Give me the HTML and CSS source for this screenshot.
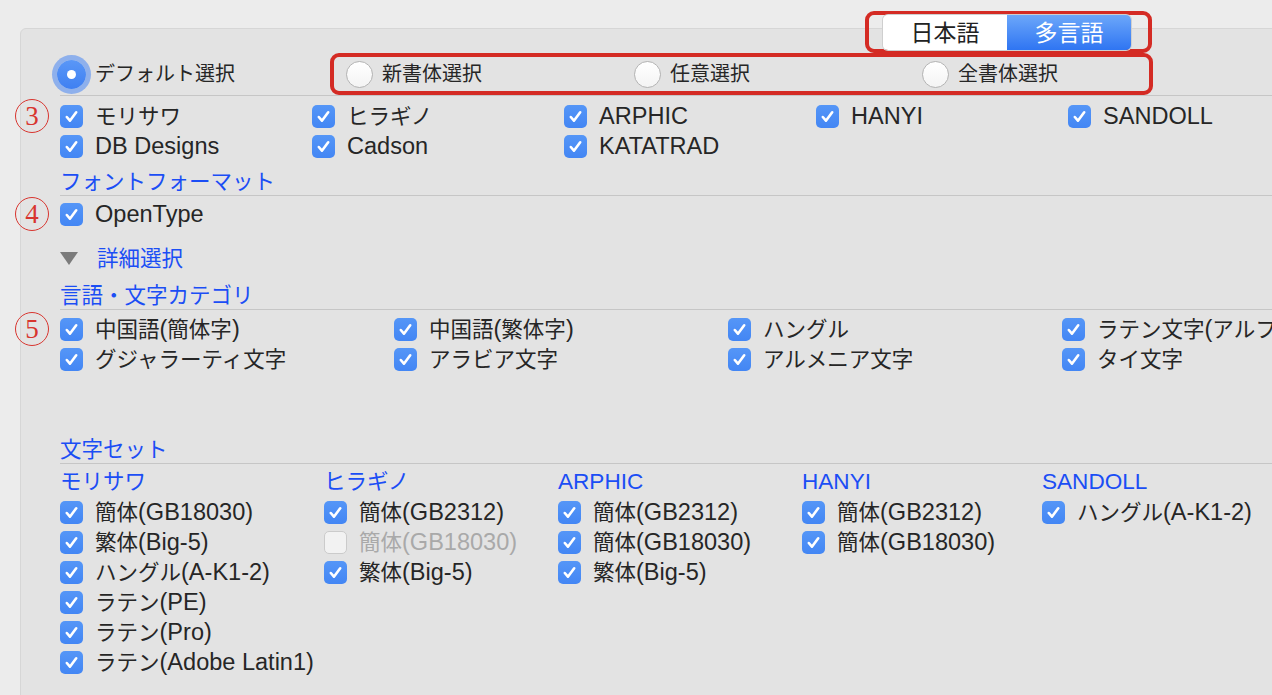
FILE: index.html
```html
<!DOCTYPE html>
<html lang="ja">
<head>
<meta charset="utf-8">
<link rel="stylesheet" href="styles.css">
</head>
<body>
<div class="seg-box">
  <div class="seg">
    <div class="seg-item"><span class="seg-t">日本語</span></div>
    <div class="seg-item on"><span class="seg-t">多言語</span></div>
  </div>
</div>

<div class="panel">
  <div class="radio-row">
    <div class="radio-default">
      <span class="radio sel"><span class="dot"></span></span>
      <span class="lbl">デフォルト選択</span>
    </div>
    <div class="radio-box">
      <div class="radio-item"><span class="radio"></span><span class="lbl">新書体選択</span></div>
      <div class="radio-item"><span class="radio"></span><span class="lbl">任意選択</span></div>
      <div class="radio-item last"><span class="radio"></span><span class="lbl">全書体選択</span></div>
    </div>
  </div>
  <div class="sep"></div>

  <div class="grid5 sec3">
    <span class="num">3</span>
    <div class="cbi"><span class="cb"><svg viewBox="0 0 22 22"><polyline points="6.5,11.5 9.5,15 15.5,7"/></svg></span><span class="t">モリサワ</span></div>
    <div class="cbi"><span class="cb"><svg viewBox="0 0 22 22"><polyline points="6.5,11.5 9.5,15 15.5,7"/></svg></span><span class="t">ヒラギノ</span></div>
    <div class="cbi"><span class="cb"><svg viewBox="0 0 22 22"><polyline points="6.5,11.5 9.5,15 15.5,7"/></svg></span><span class="t"><span class="en">ARPHIC</span></span></div>
    <div class="cbi"><span class="cb"><svg viewBox="0 0 22 22"><polyline points="6.5,11.5 9.5,15 15.5,7"/></svg></span><span class="t"><span class="en">HANYI</span></span></div>
    <div class="cbi"><span class="cb"><svg viewBox="0 0 22 22"><polyline points="6.5,11.5 9.5,15 15.5,7"/></svg></span><span class="t"><span class="en">SANDOLL</span></span></div>
    <div class="cbi"><span class="cb"><svg viewBox="0 0 22 22"><polyline points="6.5,11.5 9.5,15 15.5,7"/></svg></span><span class="t"><span class="en">DB Designs</span></span></div>
    <div class="cbi"><span class="cb"><svg viewBox="0 0 22 22"><polyline points="6.5,11.5 9.5,15 15.5,7"/></svg></span><span class="t"><span class="en">Cadson</span></span></div>
    <div class="cbi"><span class="cb"><svg viewBox="0 0 22 22"><polyline points="6.5,11.5 9.5,15 15.5,7"/></svg></span><span class="t"><span class="en">KATATRAD</span></span></div>
  </div>

  <div class="heading h-format">フォントフォーマット</div>
  <div class="sep"></div>
  <div class="sec4">
    <span class="num">4</span>
    <div class="cbi"><span class="cb"><svg viewBox="0 0 22 22"><polyline points="6.5,11.5 9.5,15 15.5,7"/></svg></span><span class="t"><span class="en">OpenType</span></span></div>
  </div>

  <div class="detail">
    <svg class="tri" viewBox="0 0 18 13"><polygon points="0,0 18,0 9,13"/></svg>
    <span class="detail-lbl">詳細選択</span>
  </div>

  <div class="heading h-lang">言語・文字カテゴリ</div>
  <div class="sep"></div>
  <div class="grid4 sec5">
    <span class="num">5</span>
    <div class="cbi"><span class="cb"><svg viewBox="0 0 22 22"><polyline points="6.5,11.5 9.5,15 15.5,7"/></svg></span><span class="t">中国語<span class="en">(</span>簡体字<span class="en">)</span></span></div>
    <div class="cbi"><span class="cb"><svg viewBox="0 0 22 22"><polyline points="6.5,11.5 9.5,15 15.5,7"/></svg></span><span class="t">中国語<span class="en">(</span>繁体字<span class="en">)</span></span></div>
    <div class="cbi"><span class="cb"><svg viewBox="0 0 22 22"><polyline points="6.5,11.5 9.5,15 15.5,7"/></svg></span><span class="t">ハングル</span></div>
    <div class="cbi"><span class="cb"><svg viewBox="0 0 22 22"><polyline points="6.5,11.5 9.5,15 15.5,7"/></svg></span><span class="t">ラテン文字<span class="en">(</span>アルフ</span></div>
    <div class="cbi"><span class="cb"><svg viewBox="0 0 22 22"><polyline points="6.5,11.5 9.5,15 15.5,7"/></svg></span><span class="t">グジャラーティ文字</span></div>
    <div class="cbi"><span class="cb"><svg viewBox="0 0 22 22"><polyline points="6.5,11.5 9.5,15 15.5,7"/></svg></span><span class="t">アラビア文字</span></div>
    <div class="cbi"><span class="cb"><svg viewBox="0 0 22 22"><polyline points="6.5,11.5 9.5,15 15.5,7"/></svg></span><span class="t">アルメニア文字</span></div>
    <div class="cbi"><span class="cb"><svg viewBox="0 0 22 22"><polyline points="6.5,11.5 9.5,15 15.5,7"/></svg></span><span class="t">タイ文字</span></div>
  </div>

  <div class="heading h-charset">文字セット</div>
  <div class="sep"></div>
  <div class="charset">
    <div class="col c1">
      <div class="vendor">モリサワ</div>
      <div class="items">
        <div class="cbi"><span class="cb"><svg viewBox="0 0 22 22"><polyline points="6.5,11.5 9.5,15 15.5,7"/></svg></span><span class="t">簡体<span class="en">(GB18030)</span></span></div>
        <div class="cbi"><span class="cb"><svg viewBox="0 0 22 22"><polyline points="6.5,11.5 9.5,15 15.5,7"/></svg></span><span class="t">繁体<span class="en">(Big-5)</span></span></div>
        <div class="cbi"><span class="cb"><svg viewBox="0 0 22 22"><polyline points="6.5,11.5 9.5,15 15.5,7"/></svg></span><span class="t">ハングル<span class="en">(A-K1-2)</span></span></div>
        <div class="cbi"><span class="cb"><svg viewBox="0 0 22 22"><polyline points="6.5,11.5 9.5,15 15.5,7"/></svg></span><span class="t">ラテン<span class="en">(PE)</span></span></div>
        <div class="cbi"><span class="cb"><svg viewBox="0 0 22 22"><polyline points="6.5,11.5 9.5,15 15.5,7"/></svg></span><span class="t">ラテン<span class="en">(Pro)</span></span></div>
        <div class="cbi"><span class="cb"><svg viewBox="0 0 22 22"><polyline points="6.5,11.5 9.5,15 15.5,7"/></svg></span><span class="t">ラテン<span class="en">(Adobe Latin1)</span></span></div>
      </div>
    </div>
    <div class="col c2">
      <div class="vendor">ヒラギノ</div>
      <div class="items">
        <div class="cbi"><span class="cb"><svg viewBox="0 0 22 22"><polyline points="6.5,11.5 9.5,15 15.5,7"/></svg></span><span class="t">簡体<span class="en">(GB2312)</span></span></div>
        <div class="cbi disabled"><span class="cb off"></span><span class="t">簡体<span class="en">(GB18030)</span></span></div>
        <div class="cbi"><span class="cb"><svg viewBox="0 0 22 22"><polyline points="6.5,11.5 9.5,15 15.5,7"/></svg></span><span class="t">繁体<span class="en">(Big-5)</span></span></div>
      </div>
    </div>
    <div class="col c3">
      <div class="vendor"><span class="en">ARPHIC</span></div>
      <div class="items">
        <div class="cbi"><span class="cb"><svg viewBox="0 0 22 22"><polyline points="6.5,11.5 9.5,15 15.5,7"/></svg></span><span class="t">簡体<span class="en">(GB2312)</span></span></div>
        <div class="cbi"><span class="cb"><svg viewBox="0 0 22 22"><polyline points="6.5,11.5 9.5,15 15.5,7"/></svg></span><span class="t">簡体<span class="en">(GB18030)</span></span></div>
        <div class="cbi"><span class="cb"><svg viewBox="0 0 22 22"><polyline points="6.5,11.5 9.5,15 15.5,7"/></svg></span><span class="t">繁体<span class="en">(Big-5)</span></span></div>
      </div>
    </div>
    <div class="col c4">
      <div class="vendor"><span class="en">HANYI</span></div>
      <div class="items">
        <div class="cbi"><span class="cb"><svg viewBox="0 0 22 22"><polyline points="6.5,11.5 9.5,15 15.5,7"/></svg></span><span class="t">簡体<span class="en">(GB2312)</span></span></div>
        <div class="cbi"><span class="cb"><svg viewBox="0 0 22 22"><polyline points="6.5,11.5 9.5,15 15.5,7"/></svg></span><span class="t">簡体<span class="en">(GB18030)</span></span></div>
      </div>
    </div>
    <div class="col c5">
      <div class="vendor"><span class="en">SANDOLL</span></div>
      <div class="items">
        <div class="cbi"><span class="cb"><svg viewBox="0 0 22 22"><polyline points="6.5,11.5 9.5,15 15.5,7"/></svg></span><span class="t">ハングル<span class="en">(A-K1-2)</span></span></div>
      </div>
    </div>
  </div>
</div>
</body>
</html>
```

FILE: styles.css
```css
html, body {
  margin: 0;
  padding: 0;
}
body {
  width: 1272px;
  height: 695px;
  overflow: hidden;
  background: #ececec;
  font-family: "Noto Sans CJK JP", "Noto Sans", sans-serif;
  font-size: 21.5px;
  color: #262626;
  position: relative;
}
.en {
  font-family: "Liberation Sans", Arial, sans-serif;
  font-size: 1.095em;
  line-height: 1;
}
.t {
  white-space: nowrap;
  margin-bottom: 3px;
}

/* segmented control annotation */
.seg-box {
  position: absolute;
  left: 865px;
  top: 11px;
  width: 265px;
  height: 34px;
  border: 4px solid #d42b24;
  border-radius: 9px;
  padding-left: 14px;
  box-sizing: content-box;
  display: flex;
  align-items: center;
  z-index: 2;
}
.seg {
  display: flex;
  width: 248px;
  height: 35px;
  border-radius: 5px;
  overflow: hidden;
  box-shadow: 0 0 0 1px #cfcfcf;
}
.seg-item {
  flex: 1;
  display: flex;
  align-items: center;
  justify-content: center;
  background: #ffffff;
  color: #222;
  font-size: 23px;
}
.seg-t {
  margin-bottom: 2px;
}
.seg-item.on {
  background: linear-gradient(#6ca7fa, #2f75f2);
  color: #ffffff;
}

/* panel */
.panel {
  margin: 28px 0 0 20px;
  width: 1300px;
  height: 700px;
  background: #e3e3e3;
  border: 1px solid #d6d6d6;
  border-radius: 6px 0 0 0;
  padding-left: 39px;
  box-sizing: border-box;
}
.sep {
  height: 1px;
  background: #c6c6c6;
}

/* radio row */
.radio-row {
  display: flex;
  align-items: center;
  height: 42px;
  margin-top: 24px;
  font-size: 20px;
}
.radio-default {
  display: flex;
  align-items: center;
  gap: 9px;
  width: 273px;
  flex: none;
  margin-left: -3px;
}
.radio {
  width: 27px;
  height: 27px;
  border-radius: 50%;
  background: linear-gradient(#ffffff, #f4f4f4);
  border: 1px solid #b4b4b4;
  box-sizing: border-box;
  display: flex;
  align-items: center;
  justify-content: center;
  flex: none;
}
.radio.sel {
  width: 29px;
  height: 29px;
  border: none;
  background: linear-gradient(#5a97f7, #3f80f2);
  box-shadow: 0 0 0 5px rgba(120, 163, 238, 0.8);
}
.dot {
  width: 9px;
  height: 9px;
  border-radius: 50%;
  background: #ffffff;
}
.lbl {
  white-space: nowrap;
  margin-bottom: 3px;
}
.radio-box {
  display: flex;
  align-items: center;
  height: 34px;
  width: 803px;
  flex: none;
  border: 4px solid #d42b24;
  border-radius: 9px;
  padding-left: 12px;
  box-sizing: content-box;
}
.radio-item {
  display: flex;
  align-items: center;
  gap: 9px;
  width: 288px;
  flex: none;
}
.radio-item.last {
  width: auto;
  flex: 1;
}

/* checkbox items */
.cbi {
  display: flex;
  align-items: center;
  gap: 12px;
  height: 30px;
  white-space: nowrap;
}
.cb {
  width: 23px;
  height: 23px;
  border-radius: 5px;
  background: linear-gradient(#5596f7, #4386f4);
  flex: none;
  display: flex;
}
.cb svg {
  width: 23px;
  height: 23px;
}
.cb polyline {
  fill: none;
  stroke: #ffffff;
  stroke-width: 2.5;
  stroke-linecap: round;
  stroke-linejoin: round;
}
.cb.off {
  background: #f2f2f2;
  border: 1px solid #cbcbcb;
  box-sizing: border-box;
}
.cbi.disabled {
  color: #a9a9a9;
}

/* circled annotation numbers */
.num {
  position: absolute;
  left: -45px;
  top: 0;
  width: 34px;
  height: 34px;
  border: 1px solid #d8352f;
  border-radius: 50%;
  box-sizing: border-box;
  color: #d8352f;
  font-family: "Liberation Serif", "Times New Roman", serif;
  font-size: 27px;
  line-height: 32px;
  text-align: center;
}

.grid5 {
  position: relative;
  display: grid;
  grid-template-columns: repeat(5, 252px);
  padding-top: 5px;
}
.sec3 .num { top: 3px; }

.heading {
  color: #1b4ef5;
  line-height: 25px;
  height: 28px;
}
.h-format { margin-top: 6px; }
.h-lang { margin-top: 8px; }
.h-charset { margin-top: 61px; }

.sec4 {
  position: relative;
  padding-top: 3px;
}
.sec4 .num { top: 1px; }

.detail {
  display: flex;
  align-items: center;
  height: 30px;
  margin-top: 14px;
}
.tri {
  width: 18px;
  height: 13px;
  margin-right: 19px;
}
.tri polygon {
  fill: #7b7b7b;
}
.detail-lbl {
  color: #1b4ef5;
  margin-bottom: 3px;
}

.grid4 {
  position: relative;
  display: grid;
  grid-template-columns: repeat(4, 334px);
  padding-top: 4px;
}
.sec5 .num { top: 2px; }

/* character sets */
.charset {
  display: flex;
  padding-top: 3px;
}
.col { flex: none; }
.c1 { width: 264px; }
.c2 { width: 234px; }
.c3 { width: 244px; }
.c4 { width: 240px; }
.c5 { width: 240px; }
.vendor {
  color: #1b4ef5;
  line-height: 25px;
  height: 28px;
}
.vendor .en { font-size: 1.05em; }
.items { margin-top: 2px; }
```
